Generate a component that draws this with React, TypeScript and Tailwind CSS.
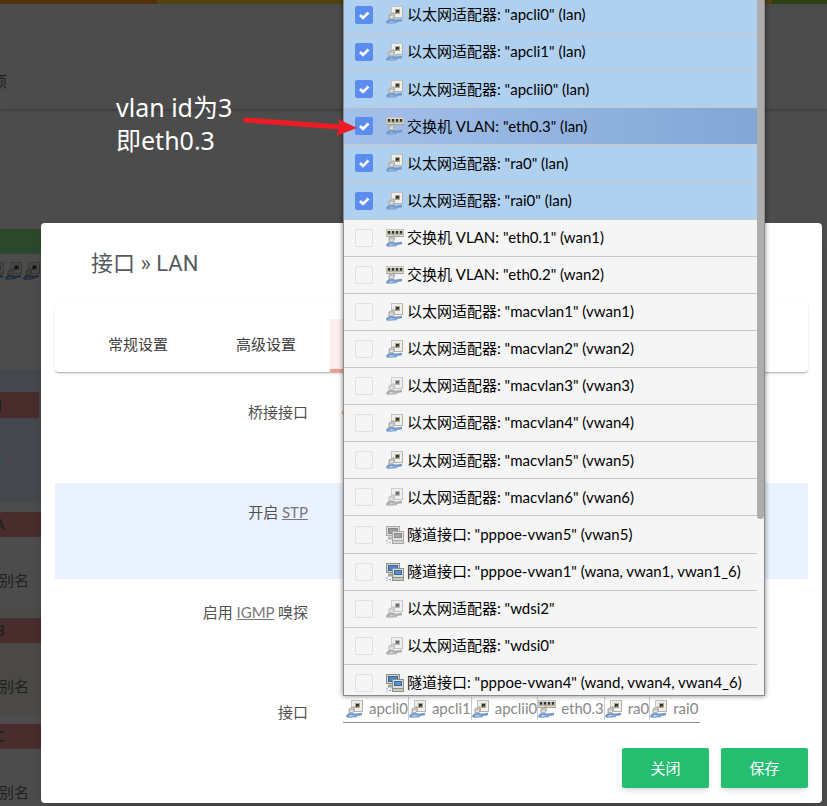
import { useState } from 'react'
import clsx from 'clsx'

type IconKind = 'ethernet' | 'switch' | 'tunnel'

interface Device {
  kind: IconKind
  type: string
  name: string
  networks?: string
  down?: boolean
}

const devices: Device[] = [
  { kind: 'ethernet', type: '以太网适配器', name: 'apcli0', networks: 'lan' },
  { kind: 'ethernet', type: '以太网适配器', name: 'apcli1', networks: 'lan' },
  { kind: 'ethernet', type: '以太网适配器', name: 'apclii0', networks: 'lan' },
  { kind: 'switch', type: '交换机 VLAN', name: 'eth0.3', networks: 'lan' },
  { kind: 'ethernet', type: '以太网适配器', name: 'ra0', networks: 'lan' },
  { kind: 'ethernet', type: '以太网适配器', name: 'rai0', networks: 'lan' },
  { kind: 'switch', type: '交换机 VLAN', name: 'eth0.1', networks: 'wan1' },
  { kind: 'switch', type: '交换机 VLAN', name: 'eth0.2', networks: 'wan2' },
  { kind: 'ethernet', type: '以太网适配器', name: 'macvlan1', networks: 'vwan1' },
  { kind: 'ethernet', type: '以太网适配器', name: 'macvlan2', networks: 'vwan2' },
  { kind: 'ethernet', type: '以太网适配器', name: 'macvlan3', networks: 'vwan3', down: true },
  { kind: 'ethernet', type: '以太网适配器', name: 'macvlan4', networks: 'vwan4' },
  { kind: 'ethernet', type: '以太网适配器', name: 'macvlan5', networks: 'vwan5' },
  { kind: 'ethernet', type: '以太网适配器', name: 'macvlan6', networks: 'vwan6', down: true },
  { kind: 'tunnel', type: '隧道接口', name: 'pppoe-vwan5', networks: 'vwan5', down: true },
  { kind: 'tunnel', type: '隧道接口', name: 'pppoe-vwan1', networks: 'wana, vwan1, vwan1_6' },
  { kind: 'ethernet', type: '以太网适配器', name: 'wdsi2', down: true },
  { kind: 'ethernet', type: '以太网适配器', name: 'wdsi0', down: true },
  { kind: 'tunnel', type: '隧道接口', name: 'pppoe-vwan4', networks: 'wand, vwan4, vwan4_6' },
]

function Cable() {
  return (
    <>
      <path d="M1 17 C2 14 5 13.500 8 14.500 C10 15.500 13 14 16 14" stroke="#7299cb" strokeWidth="2.500" />
      <path d="M1 17 C4 17.500 7 16.500 11 16.500" stroke="#7fa5d4" strokeWidth="1.500" />
      <path d="M3 9 L8 6.500 L8.500 10 L6.500 13 L3 13 Z" fill="#c4c4bf" stroke="#a9a9a4" />
      <path d="M4 10.500 H7 V12 H4 Z" fill="#e8e8e4" />
    </>
  )
}

function DeviceIcon({ kind, down }: { kind: IconKind; down?: boolean }) {
  return (
    <svg
      width="18"
      height="18"
      viewBox="0 0 18 18"
      fill="none"
      aria-hidden="true"
      className={clsx('shrink-0', down && 'opacity-75 grayscale')}
    >
      {kind === 'ethernet' && (
        <>
          <rect x="5.500" y="0.500" width="11" height="11" fill="#efeee9" stroke="#c4c3bd" />
          <path d="M16.500 1 V11.500 H8" stroke="#b3b2ac" />
          <path d="M9 3 H14 V8 H9 Z" fill="#a5a598" />
          <path d="M10 4 H13 V7 H10 Z" fill="#33332d" />
          <path d="M11 6 H13 V7 H11 Z" fill="#8a7a3c" />
          <Cable />
        </>
      )}
      {kind === 'switch' && (
        <>
          <rect x="0.500" y="0.500" width="17" height="7" fill="#dddcd4" stroke="#c4c3bd" />
          <path d="M0 7.500 H18" stroke="#a3a29c" />
          <path d="M1 2 H17 V6 H1 Z" fill="#b3b2a6" />
          <path d="M2 2 H4 V5 H2 Z M6 2 H8 V5 H6 Z M10 2 H12 V5 H10 Z M14 2 H16 V5 H14 Z" fill="#33332d" />
          <path d="M2 4 H4 V5 H2 Z M6 4 H8 V5 H6 Z M10 4 H12 V5 H10 Z M14 4 H16 V5 H14 Z" fill="#6e6233" />
          <Cable />
        </>
      )}
      {kind === 'tunnel' && (
        <>
          <rect x="0.500" y="0.500" width="13" height="9" fill="#d6d6d2" stroke="#8e8e8a" />
          <rect x="2.500" y="2.500" width="9" height="5" fill="#4f83c4" stroke="#3a669e" />
          <path d="M2 12 H7" stroke="#a2a29e" strokeWidth="3" />
          <rect x="6.500" y="5.500" width="11" height="9" fill="#deded9" stroke="#8e8e8a" />
          <rect x="8.500" y="7.500" width="7" height="4" fill="#5b90d0" stroke="#3a669e" />
          <rect x="6.500" y="14.500" width="11" height="3" fill="#c8c8c3" stroke="#8e8e8a" />
          <path d="M1 14 V18 M3 16.500 H6" stroke="#6fa4e4" strokeDasharray="2 1" />
        </>
      )}
    </svg>
  )
}

function DeviceOption({ device, checked, active, onToggle }: {
  device: Device
  checked: boolean
  active: boolean
  onToggle: () => void
}) {
  return (
    <li
      className={clsx(
        'border-b border-[#c9c9c9]',
        active ? 'bg-linear-to-r from-[#a3c0ea] to-[#82a7d6]' : checked ? 'bg-[#b0d0ef]' : 'bg-[#f5f5f5]',
      )}
    >
      <label className="flex h-full items-center pl-[11px] whitespace-nowrap text-black">
        <span className="relative mr-[13px] size-[18px] shrink-0">
          <input
            type="checkbox"
            checked={checked}
            onChange={onToggle}
            className="block size-[18px] appearance-none rounded-xs border border-[#dfdfe6] checked:border-[#5a8dee] checked:bg-[#5a8dee]"
          />
          {checked && (
            <svg viewBox="0 0 18 18" aria-hidden="true" className="pointer-events-none absolute inset-0">
              <path d="M5 9 L8 12 L13.500 6.500" fill="none" stroke="#fff" strokeWidth="2.600" />
            </svg>
          )}
        </span>
        <DeviceIcon kind={device.kind} down={device.down} />
        <span className="ml-[3px] pb-px">
          {device.type}: "{device.name}"{device.networks && ` (${device.networks})`}
        </span>
      </label>
    </li>
  )
}

function Backdrop() {
  return (
    <div aria-hidden="true" className="absolute inset-0 flex flex-col text-[#1f2022]">
      <div className="flex h-1 shrink-0">
        <div className="w-[19%] bg-[#55300f]" />
        <div className="flex-1 bg-[#524310]" />
        <div className="w-[55px] bg-[#2c4216]" />
      </div>
      <div className="flex h-[106px] shrink-0 items-center border-b border-[#3d3d3d] pt-[50px] shadow-sm">
        <div className="flex w-[7px] justify-end overflow-hidden whitespace-nowrap">项</div>
      </div>
      <div className="mt-[119px] flex w-[41px] shrink-0 flex-col overflow-hidden">
        <div className="h-[25px] shrink-0 bg-[#2c482c]" />
        <div className="flex h-[116px] shrink-0 justify-end pt-2 brightness-[0.3]">
          <DeviceIcon kind="ethernet" />
          <DeviceIcon kind="ethernet" />
          <DeviceIcon kind="ethernet" />
        </div>
        <div className="h-[133px] shrink-0 bg-[#44484d] pt-[22px]">
          <div className="flex h-[26px] w-[39px] items-center justify-end bg-[#492c2c] pr-[37px] font-bold">N</div>
          <div className="mt-[38px] h-[10px] w-px bg-[#2c5361]" />
        </div>
        {['A', 'B', 'C'].map((name, i) => (
          <div key={name} className={clsx('h-[106px] shrink-0 pt-[9px]', i === 1 && 'bg-[#4b4946]')}>
            <div className="flex h-[25px] items-center justify-end bg-[#492c2c] pr-9 font-bold">{name}</div>
            <div className="mt-8 flex justify-end pr-3 leading-[22px] whitespace-nowrap">的别名</div>
          </div>
        ))}
      </div>
    </div>
  )
}

function Field({ label, striped, children }: {
  label: React.ReactNode
  striped?: boolean
  children?: React.ReactNode
}) {
  return (
    <div className={clsx('mb-1 flex h-24 gap-[35px] pt-[18px]', striped && 'bg-[#eaf1ff]')}>
      <div className="w-[253px] shrink-0 text-right leading-[22px]">{label}</div>
      {children}
    </div>
  )
}

function App() {
  const [selected, setSelected] = useState(['apcli0', 'apcli1', 'apclii0', 'eth0.3', 'ra0', 'rai0'])

  const toggle = (name: string) => {
    setSelected(list => (list.includes(name) ? list.filter(n => n !== name) : [...list, name]))
  }

  return (
    <div className="relative min-h-screen overflow-hidden bg-[#4c4c4c] font-[Lato,'Noto_Sans_CJK_SC',sans-serif] text-[15px]">
      <Backdrop />

      {/* Dialog */}
      <div className="relative pt-[223px] pr-[5px] pb-[3px] pl-[41px]">
        <div role="dialog" aria-label="接口 » LAN" className="rounded-sm bg-white px-[14px] pb-[15px] shadow-lg">
          <h4 className="pt-6 pl-9 font-[Roboto,'Noto_Sans_CJK_SC',sans-serif] text-[22px] leading-[34px] text-[#565b60]">接口 » LAN</h4>

          <div className="mt-[21px] flex h-[71px] items-end rounded-sm border-b border-[#bbb] pl-[19px] text-[#404040] shadow-sm">
            <button type="button" className="h-[53px] px-[34px] pb-[2px]">常规设置</button>
            <button type="button" className="h-[53px] px-[34px] pb-[2px]">高级设置</button>
            <button type="button" aria-label="物理设置" className="h-[53px] w-32 border-b-3 border-[#fb9a8a] bg-[#fdeeee]" />
          </div>

          <div className="pt-[10px] text-[#505050]">
            <Field label={<label htmlFor="bridge">桥接接口</label>}>
              <span className="relative -ml-[2px] size-[18px]">
                <input id="bridge" type="checkbox" defaultChecked className="block size-[18px] appearance-none" />
                <svg viewBox="0 0 18 18" aria-hidden="true" className="pointer-events-none absolute inset-0">
                  <path d="M1 11 L7 17 L17 5" fill="none" stroke="#fb8c5a" strokeWidth="2" />
                </svg>
              </span>
            </Field>
            <Field striped label={<label htmlFor="stp">开启 <abbr className="text-[#777] underline">STP</abbr></label>}>
              <input id="stp" type="checkbox" className="size-4" />
            </Field>
            <Field label={<label htmlFor="igmp">启用 <abbr className="text-[#777] underline">IGMP</abbr> 嗅探</label>}>
              <input id="igmp" type="checkbox" className="size-4" />
            </Field>

            <div className="flex h-[65px] gap-[35px] pt-[13px]">
              <div className="w-[253px] shrink-0 pt-[5px] text-right leading-[22px]">接口</div>
              <div className="relative h-[27px]">
                <button type="button" className="flex h-[27px] items-center border-b border-[#8a8a8a] pr-[2px] pb-px pl-[3px] text-[#888]">
                  {devices.filter(d => selected.includes(d.name)).map((d, i) => (
                    <span key={d.name} className={clsx('flex items-center gap-[5px]', i > 0 && 'border-l border-[#ccc]')}>
                      <DeviceIcon kind={d.kind} />
                      {d.name}
                    </span>
                  ))}
                </button>

                <div className="absolute bottom-full left-0 flex h-[700px] w-[422px] overflow-hidden border border-[#8c8c8c] bg-[#f5f5f5] shadow-[0_0_5px_rgba(0,0,0,0.5)]">
                  <ul className="grid h-[705px] flex-1 auto-rows-fr">
                    {devices.map(d => (
                      <DeviceOption
                        key={d.name}
                        device={d}
                        checked={selected.includes(d.name)}
                        active={d.name === 'eth0.3'}
                        onToggle={() => toggle(d.name)}
                      />
                    ))}
                  </ul>
                  <div className="w-[7px]">
                    <div className="h-[522px] rounded-b-sm bg-[#adadad]" />
                  </div>
                </div>
              </div>
            </div>
          </div>

          <div className="flex justify-end gap-3 text-[15px] text-white">
            <button type="button" className="h-10 w-[87px] rounded-xs bg-[#25be70] shadow-md">关闭</button>
            <button type="button" className="h-10 w-[87px] rounded-xs bg-[#25be70] shadow-md">保存</button>
          </div>
        </div>
      </div>

      {/* Annotation */}
      <p className="absolute top-[91px] left-[116px] font-['Noto_Sans','Noto_Sans_CJK_SC',sans-serif] text-[25px] leading-[33px] text-white">
        vlan id为3
        <br />
        即eth0.3
      </p>
      <svg width="114" height="20" viewBox="0 0 114 20" aria-hidden="true" className="absolute top-[117px] left-[243px]">
        <path d="M2.500 3 L97 10" stroke="#ed1c24" strokeWidth="5" strokeLinecap="round" />
        <path d="M95 2 L114 11 L93 19 L97 10 Z" fill="#ed1c24" />
      </svg>
    </div>
  )
}

export default App
